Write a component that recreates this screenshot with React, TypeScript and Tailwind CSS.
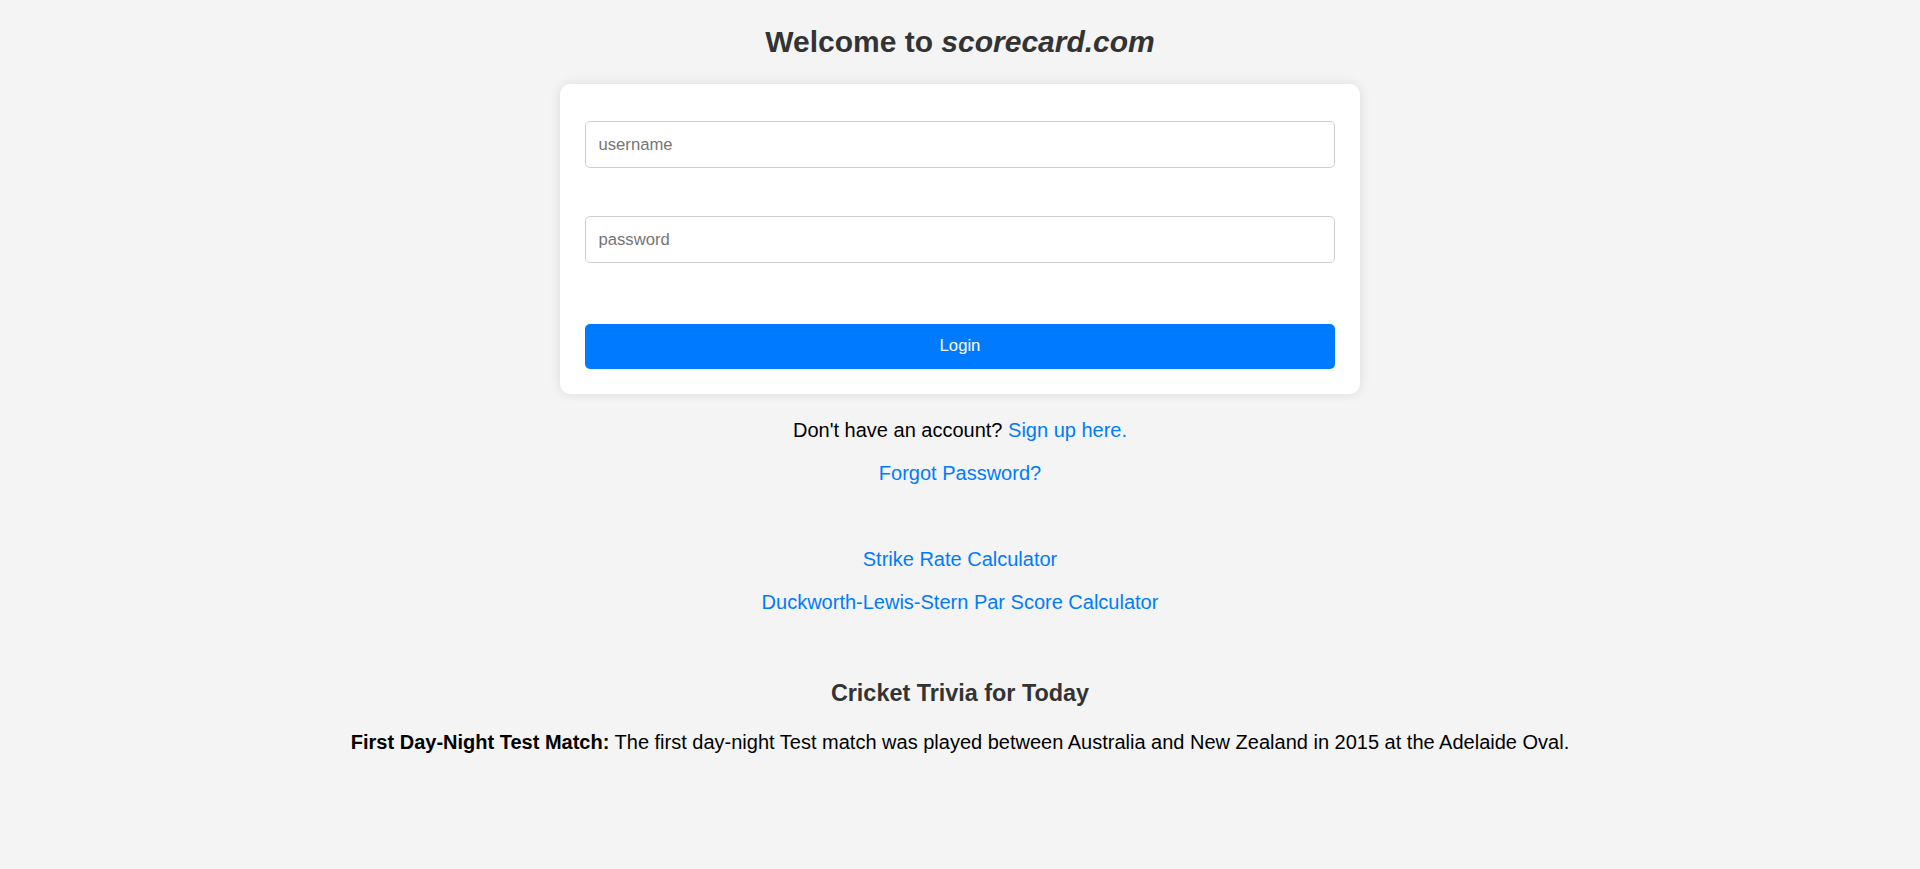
import { useState } from 'react';

const trivia = {
  title: 'First Day-Night Test Match:',
  text: 'The first day-night Test match was played between Australia and New Zealand in 2015 at the Adelaide Oval.',
};

export default function App() {
  const [username, setUsername] = useState('');
  const [password, setPassword] = useState('');

  return (
    <div className="min-h-[869px] bg-[#f4f4f4] font-['Liberation_Sans',Arial,sans-serif] flex flex-col items-center pt-[24px]">
      <h1 className="text-[30px] leading-[35px] font-bold text-[#333]">
        Welcome to <em>scorecard.com</em>
      </h1>

      <form
        className="mt-[25px] w-[800px] bg-white rounded-[10px] shadow-[0_0_12px_rgba(0,0,0,0.1)] px-[25px] pt-[37px] pb-[25px] flex flex-col"
        onSubmit={(e) => e.preventDefault()}
      >
        <input
          type="text"
          placeholder="username"
          value={username}
          onChange={(e) => setUsername(e.target.value)}
          className="h-[47px] w-full border border-[#ccc] rounded-[5px] px-[12.5px] text-[16.67px] text-black placeholder:text-[#757575] outline-none"
        />
        <input
          type="password"
          placeholder="password"
          value={password}
          onChange={(e) => setPassword(e.target.value)}
          className="mt-[48px] h-[47px] w-full border border-[#ccc] rounded-[5px] px-[12.5px] text-[16.67px] text-black placeholder:text-[#757575] outline-none"
        />
        <button
          type="submit"
          className="mt-[61px] h-[45px] w-full bg-[#007bff] rounded-[5px] text-white text-[16.67px] leading-[19px] pb-[2px]"
        >
          Login
        </button>
      </form>

      <p className="mt-[25px] text-[20px] leading-[23px] text-black">
        Don't have an account? <a href="#" className="text-[#007bff]">Sign up here.</a>
      </p>
      <p className="mt-[20px] text-[20px] leading-[23px]">
        <a href="#" className="text-[#007bff]">Forgot Password?</a>
      </p>

      <p className="mt-[63px] text-[20px] leading-[23px]">
        <a href="#" className="text-[#007bff]">Strike Rate Calculator</a>
      </p>
      <p className="mt-[20px] text-[20px] leading-[23px]">
        <a href="#" className="text-[#007bff]">Duckworth-Lewis-Stern Par Score Calculator</a>
      </p>

      <h3 className="mt-[66px] text-[23.4px] leading-[27px] font-bold text-[#333]">Cricket Trivia for Today</h3>
      <p className="mt-[24px] text-[20px] leading-[23px] text-black">
        <strong>{trivia.title}</strong> {trivia.text}
      </p>
    </div>
  );
}
